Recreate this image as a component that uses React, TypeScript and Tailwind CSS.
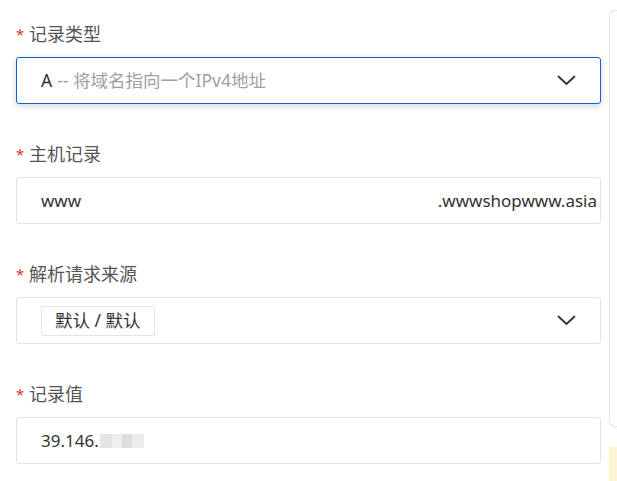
import React from "react";

const font = { fontFamily: '"Noto Sans", "Noto Sans CJK SC", sans-serif' };

function Label({ text }: { text: string }) {
  return (
    <div className="flex items-center h-[24px] text-[18px] leading-[24px] text-[#555]">
      <span className="text-[#e0363c] text-[15px] w-[13px]">*</span>
      <span>{text}</span>
    </div>
  );
}

function Chevron() {
  return (
    <svg width="19" height="11" viewBox="0 0 19 11" fill="none">
      <path d="M1.5 1.5 L9.5 9 L17.5 1.5" stroke="#333" strokeWidth="1.8" strokeLinecap="round" strokeLinejoin="round" />
    </svg>
  );
}

export default function App() {
  return (
    <div className="w-[617px] h-[481px] bg-white overflow-hidden flex" style={font}>
      <div className="ml-[16px] w-[585px] pt-[22px] flex flex-col">
        <Label text="记录类型" />
        <div className="mt-[11px] h-[47px] border border-[#0b66cc] rounded-[3px] shadow-[0_2px_6px_rgba(0,0,0,0.18)] flex items-center pl-[24px] pr-[24px] text-[17.5px]">
          <span className="text-[#333]">A</span>
          <span className="text-[#a0a0a0] ml-[5px]">-- 将域名指向一个IPv4地址</span>
          <span className="ml-auto flex"><Chevron /></span>
        </div>

        <div className="mt-[38px]"><Label text="主机记录" /></div>
        <div className="mt-[11px] h-[47px] border border-[#e3e3e3] rounded-[3px] flex items-center pl-[24px] pr-[3px] text-[17px] text-[#333]">
          <span>www</span>
          <span className="ml-auto">.wwwshopwww.asia</span>
        </div>

        <div className="mt-[38px]"><Label text="解析请求来源" /></div>
        <div className="mt-[11px] h-[47px] border border-[#e3e3e3] rounded-[3px] flex items-center pl-[24px] pr-[24px] text-[17px] text-[#333]">
          <span className="h-[30px] px-[13px] border border-[#e3e3e3] rounded-[2px] flex items-center text-[17.5px]">默认 / 默认</span>
          <span className="ml-auto flex"><Chevron /></span>
        </div>

        <div className="mt-[38px]"><Label text="记录值" /></div>
        <div className="mt-[11px] h-[47px] border border-[#e3e3e3] rounded-[3px] flex items-center pl-[24px] text-[17px] text-[#333]">
          <span>39.146.</span>
          <span className="flex items-center ml-[1px] gap-0">
            <span className="w-[12px] h-[14px] bg-[#e4e4e4]" />
            <span className="w-[10px] h-[14px] bg-[#efefef]" />
            <span className="w-[10px] h-[14px] bg-[#dedede]" />
            <span className="w-[12px] h-[14px] bg-[#ececec]" />
          </span>
        </div>
      </div>
      <div className="ml-[8px] flex-1 flex flex-col">
        <div className="mt-[10px] h-[417px] border-l border-t border-b border-[#e3e3e3] rounded-l-[6px]" />
        <div className="mt-[20px] flex-1 bg-[#fff3d3]" />
      </div>
    </div>
  );
}
